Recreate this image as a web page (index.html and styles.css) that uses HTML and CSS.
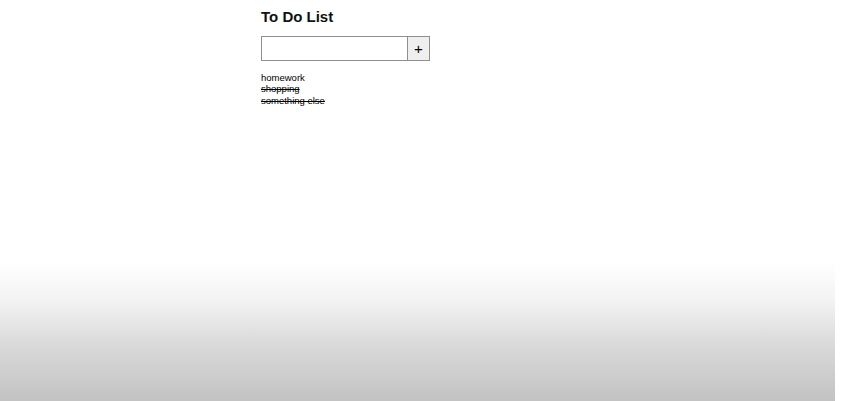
FILE: index.html
```html
<!DOCTYPE html>
<html>
<head>
<meta charset="utf-8">
<title>To Do List</title>
<link rel="stylesheet" href="styles.css">
</head>
<body>
<div class="screen">
  <main class="app">
    <h1 class="title">To Do List</h1>
    <form class="add-row" onsubmit="return false">
      <input class="add-input" type="text">
      <button class="add-btn" type="button">+</button>
    </form>
    <ul class="todo-list">
      <li class="todo">homework</li>
      <li class="todo done">shopping</li>
      <li class="todo done">something else</li>
    </ul>
  </main>
</div>
</body>
</html>
```
FILE: styles.css
```css
html, body {
  margin: 0;
  padding: 0;
  background: #ffffff;
}
.screen {
  width: 835px;
  height: 401px;
  background: linear-gradient(to bottom, #ffffff 0, #ffffff 262px, #f3f3f3 300px, #dcdcdc 340px, #c2c2c2 401px);
  font-family: "Liberation Sans", Arial, sans-serif;
  color: #000;
  overflow: hidden;
}
.app {
  padding: 8px 0 0 261px;
  display: flex;
  flex-direction: column;
  align-items: flex-start;
}
.title {
  margin: 0;
  font-size: 15px;
  line-height: 17px;
  font-weight: bold;
  color: #111;
}
.add-row {
  margin: 11px 0 0 0;
  display: flex;
  height: 25px;
}
.add-input {
  box-sizing: border-box;
  width: 146px;
  height: 25px;
  margin: 0;
  padding: 0 4px;
  border: 1px solid #8f8f8f;
  border-right: none;
  background: #fff;
  outline: none;
}
.add-btn {
  box-sizing: border-box;
  width: 23px;
  height: 25px;
  margin: 0;
  padding: 0;
  border: 1px solid #8f8f8f;
  background: #efefef;
  font-family: "Liberation Sans", Arial, sans-serif;
  font-size: 15px;
  line-height: 21px;
  color: #000;
}
.todo-list {
  list-style: none;
  margin: 11px 0 0 0;
  padding: 0;
}
.todo {
  font-size: 9.5px;
  line-height: 11.4px;
  color: #000;
}
.done {
  text-decoration: line-through;
}
```
